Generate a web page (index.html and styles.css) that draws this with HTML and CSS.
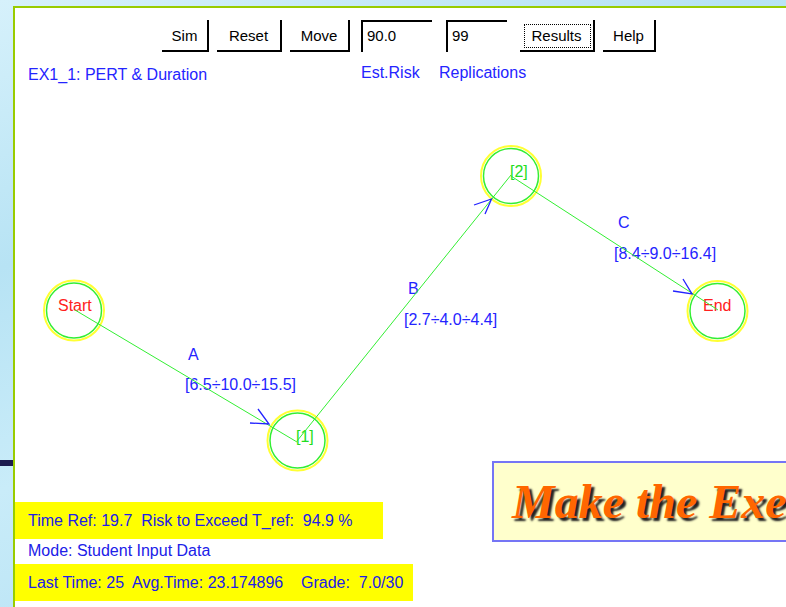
FILE: index.html
```html
<!DOCTYPE html>
<html lang="en">
<head>
    <meta charset="UTF-8">
    <title>EX1_1: PERT &amp; Duration</title>
    <link rel="stylesheet" href="styles.css">
</head>
<body>

    <div class="side">
        <div class="side-bar"></div>
    </div>

    <div class="panel">

        <svg class="diagram" width="771" height="599" viewBox="15 8 771 599">
            <!-- nodes -->
            <g class="node">
                <circle class="ring-out" cx="74" cy="310.5" r="30"/>
                <circle class="ring-in" cx="74" cy="310.5" r="27.5"/>
                <text class="lbl-red" x="58" y="311">Start</text>
            </g>
            <g class="node">
                <circle class="ring-out" cx="297.5" cy="440.5" r="30"/>
                <circle class="ring-in" cx="297.5" cy="440.5" r="27.5"/>
                <text class="lbl-green" x="296" y="442">[1]</text>
            </g>
            <g class="node">
                <circle class="ring-out" cx="511" cy="176" r="30"/>
                <circle class="ring-in" cx="511" cy="176" r="27.5"/>
                <text class="lbl-green" x="510" y="177">[2]</text>
            </g>
            <g class="node">
                <circle class="ring-out" cx="717.5" cy="311" r="30"/>
                <circle class="ring-in" cx="717.5" cy="311" r="27.5"/>
                <text class="lbl-red" x="703" y="311">End</text>
            </g>

            <!-- activity labels -->
            <text class="lbl-blue" x="188" y="360">A</text>
            <text class="lbl-blue" x="185" y="390">[6.5÷10.0÷15.5]</text>
            <text class="lbl-blue" x="408" y="294">B</text>
            <text class="lbl-blue" x="404" y="325">[2.7÷4.0÷4.4]</text>
            <text class="lbl-blue" x="618" y="228">C</text>
            <text class="lbl-blue" x="614" y="259">[8.4÷9.0÷16.4]</text>

            <!-- edges -->
            <line class="edge" x1="75" y1="310" x2="297" y2="442"/>
            <line class="edge" x1="297" y1="441" x2="511" y2="175"/>
            <line class="edge" x1="511" y1="176" x2="718" y2="310"/>

            <!-- arrow heads -->
            <polyline class="arrow" points="250,423 269,424 258,409"/>
            <polyline class="arrow" points="474,205 491.5,199 485,214"/>
            <polyline class="arrow" points="673,291 692,294 683,279"/>
        </svg>

        <div class="toolbar">
            <button class="btn w-sim">Sim</button>
            <button class="btn w-reset">Reset</button>
            <button class="btn w-move">Move</button>
            <input class="field w-risk" type="text" value="90.0">
            <input class="field w-reps" type="text" value="99">
            <button class="btn w-results focus">Results</button>
            <button class="btn w-help">Help</button>
        </div>

        <div class="labels">
            <span class="title">EX1_1: PERT &amp; Duration</span>
            <span class="cap-risk">Est.Risk</span>
            <span>Replications</span>
        </div>

        <div class="bottom">
            <div class="status">
                <div class="hl hl-short">Time Ref: 19.7  Risk to Exceed T_ref:  94.9 %</div>
                <div class="plain">Mode: Student Input Data</div>
                <div class="hl">Last Time: 25  Avg.Time: 23.174896    Grade:  7.0/30</div>
            </div>
            <div class="banner">
                <span>Make the Exercise</span>
            </div>
        </div>

    </div>

</body>
</html>
```

FILE: styles.css
```css
html, body {
    margin: 0;
    height: 607px;
    overflow: hidden;
}

body {
    display: flex;
    font-family: "Liberation Sans", Arial, sans-serif;
    background: linear-gradient(160deg, #d6f1fb 0%, #b7e3f4 30%, #c9ecf9 55%, #a8daf0 100%);
}

.side {
    width: 13px;
    flex: none;
}

.side-bar {
    margin-top: 460px;
    height: 6px;
    background-color: #1c1c4e;
}

.panel {
    flex: 1;
    margin-top: 6px;
    border-left: 2px solid #99cc00;
    border-top: 2px solid #99cc00;
    background-color: #fff;
    position: relative;
    overflow: hidden;
}

.diagram {
    position: absolute;
    left: 0;
    top: 0;
    pointer-events: none;
    font-family: "Liberation Sans", Arial, sans-serif;
    font-size: 16px;
}

.ring-out {
    fill: none;
    stroke: #ffff33;
    stroke-width: 2;
}

.ring-in {
    fill: none;
    stroke: #33ee33;
    stroke-width: 1.5;
}

.edge {
    stroke: #33ee33;
    stroke-width: 1;
}

.arrow {
    fill: none;
    stroke: #2222ff;
    stroke-width: 1.3;
}

.lbl-red {
    fill: #ff2020;
}

.lbl-green {
    fill: #22dd22;
}

.lbl-blue {
    fill: #2424ff;
}

/* toolbar */

.toolbar {
    display: flex;
    padding: 12px 0 0 147px;
    position: relative;
}

.btn, .field {
    height: 32px;
    box-sizing: border-box;
    font-family: "Liberation Sans", Arial, sans-serif;
    font-size: 15px;
    color: #000;
    background-color: #fff;
    margin: 0;
    flex: none;
}

.btn {
    border: none;
    border-right: 2px solid #000;
    border-bottom: 2px solid #000;
    padding: 0;
    text-align: center;
}

.field {
    border: none;
    border-left: 2px solid #000;
    border-top: 2px solid #000;
    padding: 0 0 4px 4px;
    outline: none;
}

.btn.focus {
    outline: 1px dotted #000;
    outline-offset: -5px;
}

.w-sim { width: 47px; }
.w-reset { width: 65px; margin-left: 8px; }
.w-move { width: 60px; margin-left: 8px; }
.w-risk { width: 71px; margin-left: 11px; }
.w-reps { width: 61px; margin-left: 14px; }
.w-results { width: 75px; margin-left: 13px; }
.w-help { width: 53px; margin-left: 8px; }

/* captions */

.labels {
    display: flex;
    margin-top: 12px;
    padding-left: 13px;
    font-size: 16px;
    line-height: 18px;
    color: #2424ff;
    position: relative;
}

.title {
    width: 333px;
    padding-top: 2px;
}

.cap-risk {
    width: 78px;
}

/* bottom */

.bottom {
    display: flex;
    align-items: flex-start;
    margin-top: 377px;
    position: relative;
}

.status {
    width: 398px;
    flex: none;
    margin-top: 41px;
    font-size: 16px;
    color: #2020e8;
}

.hl, .plain {
    white-space: pre;
    padding-left: 13px;
}

.hl {
    background-color: #ffff00;
    height: 37px;
    line-height: 37px;
}

.hl-short {
    width: 355px;
}

.plain {
    height: 25px;
    line-height: 23px;
}

.banner {
    margin-left: 79px;
    flex: none;
    width: 400px;
    height: 81px;
    box-sizing: border-box;
    border: 2px solid #7575f5;
    background-color: #ffffcc;
    padding-left: 18px;
    white-space: nowrap;
}

.banner span {
    font-family: "Liberation Serif", "Times New Roman", serif;
    font-weight: bold;
    font-style: italic;
    font-size: 48px;
    line-height: 78px;
    color: #ff6600;
    text-shadow: 3px 3px 2px #222;
}
```
